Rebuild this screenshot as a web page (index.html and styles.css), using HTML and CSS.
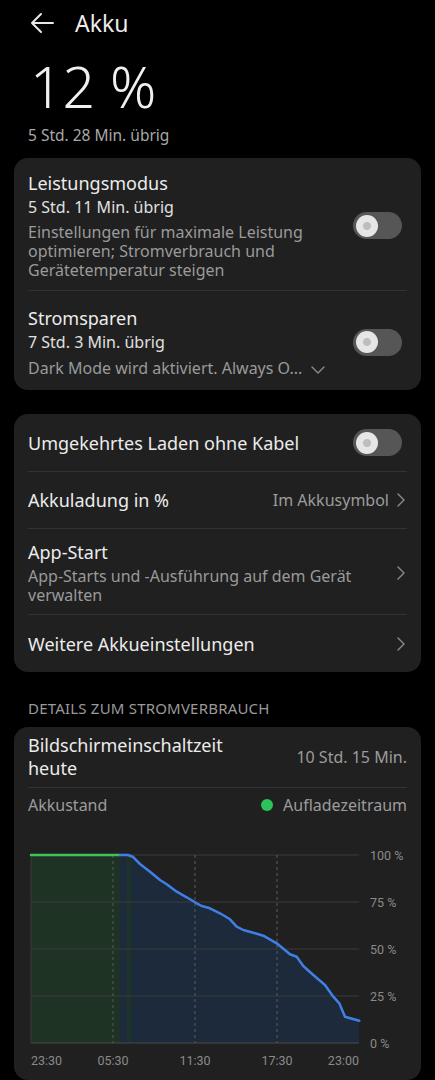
FILE: index.html
```html
<!DOCTYPE html>
<html lang="de">
<head>
  <meta charset="UTF-8">
  <meta name="viewport" content="width=device-width, initial-scale=1.0">
  <title>Akku</title>
  <link rel="stylesheet" href="styles.css">
</head>
<body>
  <header class="topbar">
    <svg class="back" width="26" height="22" viewBox="0 0 26 22">
      <path d="M24 11H3M12 2L3 11l9 9" fill="none" stroke="#e8e8e8" stroke-width="2" stroke-linecap="round" stroke-linejoin="round"/>
    </svg>
    <h1>Akku</h1>
  </header>

  <div class="level">
    <div class="percent">12 %</div>
    <div class="remaining">5 Std. 28 Min. übrig</div>
  </div>

  <section class="card">
    <div class="row mode">
      <div class="text">
        <div class="title">Leistungsmodus</div>
        <div class="sub">5 Std. 11 Min. übrig</div>
        <div class="desc">Einstellungen für maximale Leistung optimieren; Stromverbrauch und Gerätetemperatur steigen</div>
      </div>
      <div class="toggle"><span class="knob"></span></div>
    </div>
    <div class="row mode">
      <div class="text">
        <div class="title">Stromsparen</div>
        <div class="sub">7 Std. 3 Min. übrig</div>
        <div class="desc">Dark Mode wird aktiviert. Always O...
          <svg class="down" width="14" height="8" viewBox="0 0 14 8"><path d="M1 1l6 6 6-6" fill="none" stroke="#8c8c8c" stroke-width="1.4" stroke-linecap="round" stroke-linejoin="round"/></svg>
        </div>
      </div>
      <div class="toggle"><span class="knob"></span></div>
    </div>
  </section>

  <section class="card">
    <div class="row single">
      <div class="title">Umgekehrtes Laden ohne Kabel</div>
      <div class="toggle"><span class="knob"></span></div>
    </div>
    <div class="row single">
      <div class="title">Akkuladung in %</div>
      <div class="value">Im Akkusymbol
        <svg class="chev" width="8" height="14" viewBox="0 0 8 14"><path d="M1 1l6 6-6 6" fill="none" stroke="#8c8c8c" stroke-width="1.4" stroke-linecap="round" stroke-linejoin="round"/></svg>
      </div>
    </div>
    <div class="row app">
      <div class="text">
        <div class="title">App-Start</div>
        <div class="desc">App-Starts und -Ausführung auf dem Gerät verwalten</div>
      </div>
      <svg class="chev" width="8" height="14" viewBox="0 0 8 14"><path d="M1 1l6 6-6 6" fill="none" stroke="#8c8c8c" stroke-width="1.4" stroke-linecap="round" stroke-linejoin="round"/></svg>
    </div>
    <div class="row single">
      <div class="title">Weitere Akkueinstellungen</div>
      <svg class="chev" width="8" height="14" viewBox="0 0 8 14"><path d="M1 1l6 6-6 6" fill="none" stroke="#8c8c8c" stroke-width="1.4" stroke-linecap="round" stroke-linejoin="round"/></svg>
    </div>
  </section>

  <div class="section-label">DETAILS ZUM STROMVERBRAUCH</div>

  <section class="card usage">
    <div class="row screen">
      <div class="title">Bildschirmeinschaltzeit<br>heute</div>
      <div class="value">10 Std. 15 Min.</div>
    </div>
    <div class="row legend">
      <div class="label">Akkustand</div>
      <div class="label"><span class="dot"></span>Aufladezeitraum</div>
    </div>
    <svg class="chart" width="407" height="250" viewBox="0 0 407 250">
      <defs>
        <linearGradient id="band" x1="0" x2="1" y1="0" y2="0">
          <stop offset="0" stop-color="#1f3324"/>
          <stop offset="0.86" stop-color="#1f3324"/>
          <stop offset="0.88" stop-color="#1c2a3b"/>
          <stop offset="0.93" stop-color="#1c2a3b"/>
          <stop offset="0.95" stop-color="#1f3526"/>
          <stop offset="1" stop-color="#1c2a3b"/>
        </linearGradient>
      </defs>
      <!-- Flächen -->
      <rect x="17" y="25" width="102" height="188" fill="url(#band)"/>
      <path d="M119 25 L114 25 L118.7 26.7 L126 34 L136 41.7 L146 50 L152.7 54.3 L162.7 61.7 L172.7 67.3 L182.7 73.3 L187.7 76 L194.3 77.7 L206 83.3 L216 89.3 L222.7 96.7 L229.3 100 L239.3 102.7 L249.3 105.7 L262.7 113.3 L276 124.3 L282.7 126.7 L289.3 136 L299.3 145 L311 155 L319.3 166.7 L325.3 173.3 L331 186.7 L345.3 190.7 L345.3 213 L119 213 Z" fill="#1c2a3b"/>
      <!-- Raster -->
      <g stroke="#3a3a3a" stroke-width="1">
        <line x1="17" y1="25" x2="345" y2="25"/>
        <line x1="17" y1="72" x2="345" y2="72"/>
        <line x1="17" y1="119" x2="345" y2="119"/>
        <line x1="17" y1="166" x2="345" y2="166"/>
        <line x1="17" y1="213" x2="345" y2="213" stroke="#4a4a4a"/>
        <line x1="17" y1="25" x2="17" y2="213"/>
      </g>
      <g stroke="#5a5a5a" stroke-width="1" stroke-dasharray="3 3">
        <line x1="99" y1="25" x2="99" y2="213"/>
        <line x1="181" y1="25" x2="181" y2="213"/>
        <line x1="263" y1="25" x2="263" y2="213"/>
      </g>
      <!-- Linie -->
      <path d="M17 25 L106 25" fill="none" stroke="#3dc45a" stroke-width="2.5" stroke-linecap="round"/>
      <path d="M106 25 L114 25 L118.7 26.7 L126 34 L136 41.7 L146 50 L152.7 54.3 L162.7 61.7 L172.7 67.3 L182.7 73.3 L187.7 76 L194.3 77.7 L206 83.3 L216 89.3 L222.7 96.7 L229.3 100 L239.3 102.7 L249.3 105.7 L262.7 113.3 L276 124.3 L282.7 126.7 L289.3 136 L299.3 145 L311 155 L319.3 166.7 L325.3 173.3 L331 186.7 L345.3 190.7" fill="none" stroke="#3f7fe6" stroke-width="2.5" stroke-linejoin="round" stroke-linecap="round"/>
      <!-- Achsen -->
      <g class="axis" fill="#8a8a8a" font-size="12.5">
        <text x="356" y="29.5">100 %</text>
        <text x="356" y="76.5">75 %</text>
        <text x="356" y="123.5">50 %</text>
        <text x="356" y="170.5">25 %</text>
        <text x="356" y="217.5">0 %</text>
        <text x="17" y="235">23:30</text>
        <text x="99" y="235" text-anchor="middle">05:30</text>
        <text x="181" y="235" text-anchor="middle">11:30</text>
        <text x="263" y="235" text-anchor="middle">17:30</text>
        <text x="345" y="235" text-anchor="end">23:00</text>
      </g>
    </svg>
  </section>
</body>
</html>
```

FILE: styles.css
```css
body {
  margin: 0;
  background: #000;
  color: #e8e8e8;
  font-family: "Noto Sans", Roboto, sans-serif;
  width: 435px;
  overflow: hidden;
}
.topbar {
  display: flex;
  align-items: center;
  height: 46px;
  padding-left: 29px;
}
.back {
  display: block;
}
.topbar h1 {
  margin: 0 0 0 20px;
  font-size: 23px;
  font-weight: 400;
  color: #ececec;
}
.level {
  padding: 8px 28px 0 30px;
  height: 104px;
}
.percent {
  font-size: 57px;
  font-weight: 300;
  line-height: 64px;
  color: #f0f0f0;
}
.remaining {
  margin: 6px 0 0 -2px;
  font-size: 15.5px;
  color: #a8a8a8;
}
.card {
  margin: 0 14px 24px;
  background: #202020;
  border-radius: 14px;
  padding: 0 14px;
}
.row {
  display: flex;
  align-items: center;
  justify-content: space-between;
  border-bottom: 1px solid #333;
}
.row:last-child {
  border-bottom: none;
}
.text {
  flex: 1;
  min-width: 0;
}
.title {
  font-size: 18px;
  line-height: 24px;
  color: #ececec;
}
.sub {
  font-size: 16px;
  line-height: 25px;
  color: #e0e0e0;
}
.desc {
  font-size: 16px;
  line-height: 19px;
  color: #9a9a9a;
}
.mode {
  padding: 13px 0 10px;
}
.mode .desc {
  margin-top: 3px;
  padding-right: 40px;
}
.mode + .mode {
  padding: 15px 0 12px;
}
.mode + .mode .desc {
  margin-top: 4px;
  padding-right: 0;
  white-space: nowrap;
}
.down {
  margin-left: 5px;
  vertical-align: middle;
}
.toggle {
  flex: none;
  width: 49px;
  height: 27px;
  margin-right: 5px;
  border-radius: 14px;
  background: #565656;
  display: flex;
  align-items: center;
  padding-left: 3px;
  box-sizing: border-box;
}
.knob {
  width: 22px;
  height: 22px;
  border-radius: 50%;
  background: radial-gradient(circle, #bdbdbd 0 3.5px, #e6e6e6 4.5px);
}
.single {
  min-height: 56px;
}
.card .single:first-child {
  min-height: 57px;
}
.card .single:last-child {
  min-height: 57px;
}
.value {
  display: flex;
  align-items: center;
  gap: 8px;
  font-size: 16px;
  color: #9c9c9c;
}
.chev {
  flex: none;
  margin-right: 2px;
}
.app {
  padding: 11px 0 9px;
}
.app .desc {
  margin-top: 3px;
  padding-right: 20px;
}
.section-label {
  padding: 0 28px;
  margin-top: 26px;
  height: 29px;
  line-height: 20px;
  font-size: 15px;
  color: #9a9a9a;
  letter-spacing: 0.2px;
}
.usage {
  padding-bottom: 0;
}
.screen {
  padding: 7px 0 7px;
  line-height: 23px;
}
.screen .title {
  line-height: 23px;
}
.legend {
  border-bottom: none;
  height: 33px;
}
.label {
  font-size: 16px;
  color: #9c9c9c;
  display: flex;
  align-items: center;
}
.dot {
  width: 12px;
  height: 12px;
  border-radius: 50%;
  background: #2bc35a;
  margin-right: 10px;
}
.chart {
  display: block;
  margin: 9px -14px 0;
}
.axis {
  font-family: Roboto, sans-serif;
}
```
